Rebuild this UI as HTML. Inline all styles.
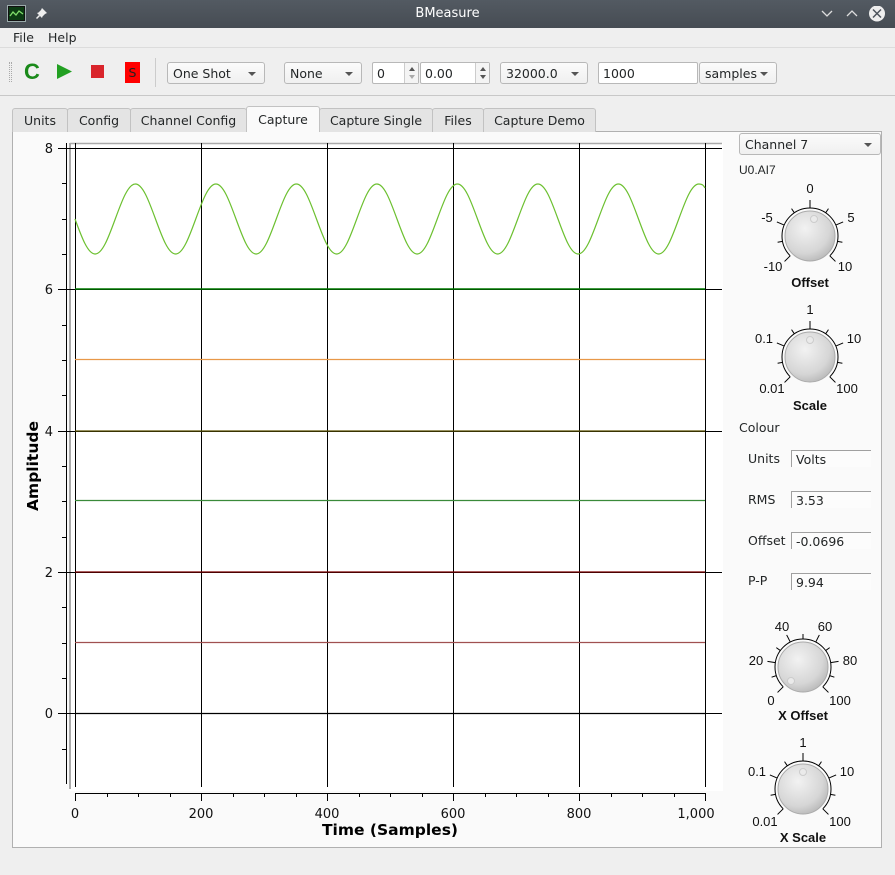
<!DOCTYPE html>
<html><head><meta charset="utf-8"><style>
*{margin:0;padding:0;box-sizing:border-box}
body{width:895px;height:875px;background:#efefef;font-family:"DejaVu Sans","Liberation Sans",sans-serif;font-size:12.5px;color:#232627;position:relative;overflow:hidden}
.a{position:absolute}
.title{left:0;top:0;width:895px;height:28px;background:linear-gradient(#535a62,#464c53);color:#fff}
.cb{position:absolute;height:22px;top:62px;border:1px solid #b8b8b8;border-radius:3px;background:linear-gradient(#fbfbfb,#f0f0f0);padding:3px 5px;white-space:nowrap}
.cb .ar{position:absolute;right:8px;top:9px;width:0;height:0;border-left:4px solid transparent;border-right:4px solid transparent;border-top:4px solid #555}
.ed{position:absolute;height:22px;top:62px;border:1px solid #b8b8b8;border-radius:2px;background:#fff;padding:3px 4px}
.tab{position:absolute;top:108px;height:24px;border:1px solid #c2c2c2;border-bottom:none;border-radius:3px 3px 0 0;background:#e4e4e4;text-align:center;padding-top:4px}
.fld{position:absolute;left:791px;width:80px;height:17px;border-top:1px solid #a0a0a0;border-left:1px solid #a0a0a0;background:#fcfcfc;padding:0 4px;font-size:12.5px;line-height:17px}
.lb{position:absolute;left:748px}
</style></head><body>
<div class="a title">
 <div class="a" style="left:7px;top:5px;width:19px;height:17px;background:#111;border:1px solid #9aa"><svg width="17" height="15"><rect x="1" y="1" width="15" height="13" fill="#0b3b12"/><path d="M2 10 L5 6 L8 9 L11 5 L15 8" stroke="#7fdc6a" fill="none" stroke-width="1.3"/></svg></div>
 <svg class="a" style="left:35px;top:6px" width="14" height="14"><path d="M7 2 L12 7 L10 8 L7.5 10.5 L7 12 L2 7 L3.5 6.5 L6 4 Z" fill="#eee"/><path d="M4.5 9.5 L1.5 12.5" stroke="#eee" stroke-width="1.5"/></svg>
 <div class="a" style="left:0;width:895px;top:6px;text-align:center;font-size:13px">BMeasure</div>
 <svg class="a" style="left:818px;top:6px" width="75" height="18"><path d="M4 5 L9 10 L14 5" stroke="#ddd" fill="none" stroke-width="1.3"/><path d="M29 10 L34 5 L39 10" stroke="#ddd" fill="none" stroke-width="1.3"/><circle cx="59" cy="7.5" r="8" fill="#eee"/><path d="M55 3.5 L63 11.5 M63 3.5 L55 11.5" stroke="#4d545c" stroke-width="1.5"/></svg>
</div>
<div class="a" style="left:13px;top:30px">File</div><div class="a" style="left:48px;top:30px">Help</div>
<div class="a" style="left:0;top:47px;width:895px;height:49px;border-top:1px solid #dcdcdc;border-bottom:1px solid #c8c8c8"></div>
<div class="a" style="left:9px;top:62px;width:3px;height:20px;border-left:1px dotted #aaa;border-right:1px dotted #aaa"></div>
<div class="a" style="left:24px;top:59px;color:#1a8a1a;font:bold 22px 'Liberation Sans',sans-serif">C</div>
<svg class="a" style="left:55px;top:63px" width="20" height="18"><path d="M2 1 L17 8.5 L2 16 Z" fill="#22a022"/></svg>
<div class="a" style="left:91px;top:65px;width:13px;height:13px;background:#d9242b"></div>
<div class="a" style="left:125px;top:62px;width:15px;height:21px;background:#f00;color:#222;text-align:center;padding-top:3px">S</div>
<div class="a" style="left:155px;top:58px;width:1px;height:29px;background:#ccc"></div>
<div class="cb" style="left:167px;width:98px">One Shot<div class="ar"></div></div>
<div class="cb" style="left:284px;width:78px">None<div class="ar"></div></div>
<div class="ed" style="left:372px;width:47px">0<div class="a" style="left:31px;top:0;width:14px;height:20px;border-left:1px solid #ccc;background:#f4f4f4"><svg width="14" height="20"><path d="M4 8 L7 4 L10 8 Z" fill="#555"/><path d="M4 12 L7 16 L10 12 Z" fill="#aaa"/></svg></div></div>
<div class="ed" style="left:420px;width:70px">0.00<div class="a" style="left:54px;top:0;width:14px;height:20px;border-left:1px solid #ccc;background:#f4f4f4"><svg width="14" height="20"><path d="M4 8 L7 4 L10 8 Z" fill="#555"/><path d="M4 12 L7 16 L10 12 Z" fill="#555"/></svg></div></div>
<div class="cb" style="left:500px;width:88px">32000.0<div class="ar"></div></div>
<div class="ed" style="left:598px;width:100px">1000</div>
<div class="cb" style="left:699px;width:78px">samples<div class="ar"></div></div>

<div class="a" style="left:12px;top:131px;width:870px;height:717px;border:1px solid #b0b0b0;background:#fafafa"></div>
<div class="tab" style="left:12px;width:56px">Units</div>
<div class="tab" style="left:67px;width:64px">Config</div>
<div class="tab" style="left:130px;width:117px">Channel Config</div>
<div class="tab" style="left:246px;top:106px;height:26px;width:74px;background:#fafafa;padding-top:5px">Capture</div>
<div class="tab" style="left:319px;width:114px">Capture Single</div>
<div class="tab" style="left:432px;width:52px">Files</div>
<div class="tab" style="left:483px;width:113px">Capture Demo</div>

<svg class="a" style="left:0;top:0" width="895" height="875" font-family="DejaVu Sans,sans-serif">
 <rect x="70" y="143" width="653" height="648" fill="#fff"/>
 <line x1="70" y1="143.5" x2="722" y2="143.5" stroke="#aaa" stroke-width="1.5"/>
 <line x1="70" y1="143" x2="70" y2="789" stroke="#aaa" stroke-width="2"/>
 <line x1="66.5" y1="143" x2="66.5" y2="784" stroke="#000"/>
 <g stroke="#000">
  <line x1="58" y1="148.5" x2="722" y2="148.5"/><line x1="58" y1="289.5" x2="722" y2="289.5"/><line x1="58" y1="431.5" x2="722" y2="431.5"/><line x1="58" y1="572.5" x2="722" y2="572.5"/><line x1="58" y1="713.5" x2="722" y2="713.5"/>
  <line x1="75.5" y1="143" x2="75.5" y2="787"/><line x1="201.5" y1="143" x2="201.5" y2="787"/><line x1="327.5" y1="143" x2="327.5" y2="787"/><line x1="453.5" y1="143" x2="453.5" y2="787"/><line x1="579.5" y1="143" x2="579.5" y2="787"/><line x1="705.5" y1="143" x2="705.5" y2="787"/>
  <path d="M62 183.5h4M62 219.5h4M62 254.5h4M62 325.5h4M62 360.5h4M62 395.5h4M62 466.5h4M62 501.5h4M62 537.5h4M62 607.5h4M62 643.5h4M62 678.5h4M62 749.5h4"/>
  <line x1="75" y1="793.5" x2="706" y2="793.5"/>
  <path d="M75.5 793v8M201.5 793v8M327.5 793v8M453.5 793v8M579.5 793v8M705.5 793v8M107.5 793v4M138.5 793v4M170.5 793v4M233.5 793v4M264.5 793v4M296.5 793v4M359.5 793v4M390.5 793v4M422.5 793v4M485.5 793v4M516.5 793v4M548.5 793v4M611.5 793v4M642.5 793v4M674.5 793v4"/>
 </g>
 <line x1="75" y1="289" x2="705" y2="289" stroke="#007800" stroke-width="1.5"/>
 <line x1="75" y1="359.5" x2="705" y2="359.5" stroke="#e89848" stroke-width="1.2"/>
 <line x1="75" y1="431" x2="705" y2="431" stroke="#5a5000" stroke-width="1.3"/>
 <line x1="75" y1="500.5" x2="705" y2="500.5" stroke="#3a8a3a" stroke-width="1.2"/>
 <line x1="75" y1="572" x2="705" y2="572" stroke="#7a0000" stroke-width="1.3"/>
 <line x1="75" y1="642.5" x2="705" y2="642.5" stroke="#a05050" stroke-width="1.2"/>
 <line x1="75" y1="713.5" x2="705" y2="713.5" stroke="#000" stroke-width="1.2"/>
 <path fill="none" stroke="#6cc030" stroke-width="1.2" d="M75 219
 c 6.73 18.38 12.82 35 20.125 35 c 7.3 0 13.39 -16.62 20.125 -35 c 6.73 -18.38 12.82 -35 20.125 -35 c 7.3 0 13.39 16.62 20.125 35
 c 6.73 18.38 12.82 35 20.125 35 c 7.3 0 13.39 -16.62 20.125 -35 c 6.73 -18.38 12.82 -35 20.125 -35 c 7.3 0 13.39 16.62 20.125 35
 c 6.73 18.38 12.82 35 20.125 35 c 7.3 0 13.39 -16.62 20.125 -35 c 6.73 -18.38 12.82 -35 20.125 -35 c 7.3 0 13.39 16.62 20.125 35
 c 6.73 18.38 12.82 35 20.125 35 c 7.3 0 13.39 -16.62 20.125 -35 c 6.73 -18.38 12.82 -35 20.125 -35 c 7.3 0 13.39 16.62 20.125 35
 c 6.73 18.38 12.82 35 20.125 35 c 7.3 0 13.39 -16.62 20.125 -35 c 6.73 -18.38 12.82 -35 20.125 -35 c 7.3 0 13.39 16.62 20.125 35
 c 6.73 18.38 12.82 35 20.125 35 c 7.3 0 13.39 -16.62 20.125 -35 c 6.73 -18.38 12.82 -35 20.125 -35 c 7.3 0 13.39 16.62 20.125 35
 c 6.73 18.38 12.82 35 20.125 35 c 7.3 0 13.39 -16.62 20.125 -35 c 6.73 -18.38 12.82 -35 20.125 -35 c 7.3 0 13.39 16.62 20.125 35
 c 6.73 18.38 12.82 35 20.125 35 c 7.3 0 13.39 -16.62 20.125 -35 c 6.73 -18.38 12.82 -35 20.125 -35 c 4 0 5 2 6.1 4"/>
 <g font-size="13" fill="#111" text-anchor="end">
  <text x="53" y="153">8</text><text x="53" y="294">6</text><text x="53" y="436">4</text><text x="53" y="577">2</text><text x="53" y="718">0</text>
 </g>
 <g font-size="13" fill="#111" text-anchor="middle">
  <text x="75" y="818">0</text><text x="201" y="818">200</text><text x="327" y="818">400</text><text x="453" y="818">600</text><text x="579" y="818">800</text><text x="696" y="818">1,000</text>
 </g>
 <text x="390" y="835" font-size="15.5" font-weight="bold" text-anchor="middle">Time (Samples)</text>
 <text transform="translate(38,466) rotate(-90)" font-size="15.5" font-weight="bold" text-anchor="middle">Amplitude</text>

 <defs><radialGradient id="kg" cx="0.4" cy="0.35" r="0.7"><stop offset="0" stop-color="#f2f2f2"/><stop offset="0.7" stop-color="#d6d6d6"/><stop offset="1" stop-color="#b8b8b8"/></radialGradient></defs>
 <g font-family="Liberation Sans,sans-serif" font-size="13" fill="#111" text-anchor="middle">
  <g transform="translate(810,236)">
   <circle r="25" fill="url(#kg)" stroke="#aaa"/><circle cx="4" cy="-17" r="3.5" fill="#eaeaea" stroke="#ccc"/>
   <path d="M-19.8 19.8 A28 28 0 1 1 19.8 19.8" fill="none" stroke="#000"/>
   <g stroke="#000"><line y1="-28" y2="-36"/><line y1="-28" y2="-33" transform="rotate(34)"/><line y1="-28" y2="-36" transform="rotate(67)"/><line y1="-28" y2="-33" transform="rotate(101)"/><line y1="-28" y2="-36" transform="rotate(135)"/><line y1="-28" y2="-33" transform="rotate(-34)"/><line y1="-28" y2="-36" transform="rotate(-67)"/><line y1="-28" y2="-33" transform="rotate(-101)"/><line y1="-28" y2="-36" transform="rotate(-135)"/></g>
   <text y="-43">0</text><text x="-43" y="-14">-5</text><text x="41" y="-14">5</text><text x="-37" y="35">-10</text><text x="35" y="35">10</text>
   <text y="51" font-weight="bold">Offset</text>
  </g>
  <g transform="translate(810,357)">
   <circle r="25" fill="url(#kg)" stroke="#aaa"/><circle cx="0" cy="-17" r="3.5" fill="#eaeaea" stroke="#ccc"/>
   <path d="M-19.8 19.8 A28 28 0 1 1 19.8 19.8" fill="none" stroke="#000"/>
   <g stroke="#000"><line y1="-28" y2="-36"/><line y1="-28" y2="-33" transform="rotate(34)"/><line y1="-28" y2="-36" transform="rotate(67)"/><line y1="-28" y2="-33" transform="rotate(101)"/><line y1="-28" y2="-36" transform="rotate(135)"/><line y1="-28" y2="-33" transform="rotate(-34)"/><line y1="-28" y2="-36" transform="rotate(-67)"/><line y1="-28" y2="-33" transform="rotate(-101)"/><line y1="-28" y2="-36" transform="rotate(-135)"/></g>
   <text y="-43">1</text><text x="-46" y="-14">0.1</text><text x="44" y="-14">10</text><text x="-38" y="36">0.01</text><text x="37" y="36">100</text>
   <text y="53" font-weight="bold">Scale</text>
  </g>
  <g transform="translate(803,667)">
   <circle r="25" fill="url(#kg)" stroke="#aaa"/><circle cx="-12" cy="14" r="3.5" fill="#eaeaea" stroke="#ccc"/>
   <path d="M-19.8 19.8 A28 28 0 1 1 19.8 19.8" fill="none" stroke="#000"/>
   <g stroke="#000"><line y1="-28" y2="-33"/><line y1="-28" y2="-36" transform="rotate(27)"/><line y1="-28" y2="-33" transform="rotate(54)"/><line y1="-28" y2="-36" transform="rotate(81)"/><line y1="-28" y2="-33" transform="rotate(108)"/><line y1="-28" y2="-36" transform="rotate(135)"/><line y1="-28" y2="-36" transform="rotate(-27)"/><line y1="-28" y2="-33" transform="rotate(-54)"/><line y1="-28" y2="-36" transform="rotate(-81)"/><line y1="-28" y2="-33" transform="rotate(-108)"/><line y1="-28" y2="-36" transform="rotate(-135)"/></g>
   <text x="-21" y="-36">40</text><text x="22" y="-36">60</text><text x="-47" y="-2">20</text><text x="47" y="-2">80</text><text x="-32" y="38">0</text><text x="37" y="38">100</text>
   <text y="53" font-weight="bold">X Offset</text>
  </g>
  <g transform="translate(803,789)">
   <circle r="25" fill="url(#kg)" stroke="#aaa"/><circle cx="0" cy="-17" r="3.5" fill="#eaeaea" stroke="#ccc"/>
   <path d="M-19.8 19.8 A28 28 0 1 1 19.8 19.8" fill="none" stroke="#000"/>
   <g stroke="#000"><line y1="-28" y2="-36"/><line y1="-28" y2="-33" transform="rotate(34)"/><line y1="-28" y2="-36" transform="rotate(67)"/><line y1="-28" y2="-33" transform="rotate(101)"/><line y1="-28" y2="-36" transform="rotate(135)"/><line y1="-28" y2="-33" transform="rotate(-34)"/><line y1="-28" y2="-36" transform="rotate(-67)"/><line y1="-28" y2="-33" transform="rotate(-101)"/><line y1="-28" y2="-36" transform="rotate(-135)"/></g>
   <text y="-42">1</text><text x="-46" y="-13">0.1</text><text x="44" y="-13">10</text><text x="-38" y="37">0.01</text><text x="37" y="37">100</text>
   <text y="53" font-weight="bold">X Scale</text>
  </g>
 </g>
</svg>

<div class="cb" style="left:739px;top:133px;width:142px">Channel 7<div class="ar"></div></div>
<div class="a" style="left:739px;top:163px;font:12px 'Liberation Sans',sans-serif">U0.AI7</div>
<div class="a" style="left:739px;top:420px">Colour</div>
<div class="lb" style="top:451px">Units</div><div class="fld" style="top:450px">Volts</div>
<div class="lb" style="top:492px">RMS</div><div class="fld" style="top:491px">3.53</div>
<div class="lb" style="top:533px">Offset</div><div class="fld" style="top:532px">-0.0696</div>
<div class="lb" style="top:573px">P-P</div><div class="fld" style="top:573px">9.94</div>
</body></html>
